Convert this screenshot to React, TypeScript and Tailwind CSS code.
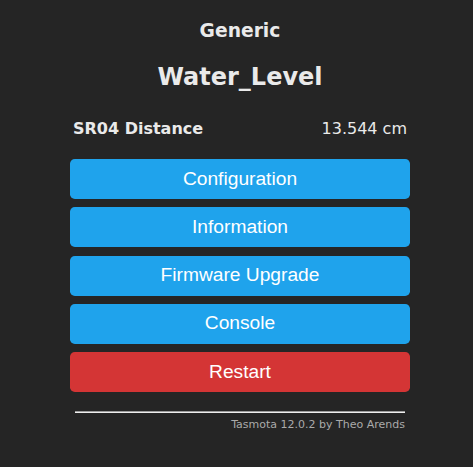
export default function App() {
  const buttons = ["Configuration", "Information", "Firmware Upgrade", "Console"];

  return (
    <div className="min-h-screen w-full bg-[#252525] text-[#eaeaea] font-['Verdana','DejaVu_Sans',sans-serif]">
      <div className="ml-[70px] w-[340px] pt-[20px] flex flex-col">
        {/* Titles */}
        <h3 className="text-center text-[18.72px] leading-[22px] font-bold">Generic</h3>
        <h2 className="mt-[21px] text-center text-[24px] leading-[28px] font-bold">Water_Level</h2>

        {/* Sensor row */}
        <div className="mt-[28px] flex justify-between px-[3px] text-[16px] leading-[20px]">
          <span className="font-bold">SR04 Distance</span>
          <span>13.544 cm</span>
        </div>

        {/* Menu buttons */}
        <div className="mt-[20px] flex flex-col gap-[8.25px] font-['Liberation_Sans','Arial',sans-serif]">
          {buttons.map((label) => (
            <button
              key={label}
              className="h-[40px] w-full rounded-[4.8px] bg-[#1fa3ec] text-[19.2px] text-white"
            >
              {label}
            </button>
          ))}
          <button className="h-[40px] w-full rounded-[4.8px] bg-[#d43535] text-[19.2px] text-white">
            Restart
          </button>
        </div>

        {/* Footer */}
        <div className="mt-[19px] px-[5px] text-right text-[11px]">
          <div className="h-[2px] border-t border-[#9c9c9c] border-b-[#eeeeee] border-b" />
          <div className="mt-[5px] leading-[14px] text-[#aaaaaa]">Tasmota 12.0.2 by Theo Arends</div>
        </div>
      </div>
    </div>
  );
}
